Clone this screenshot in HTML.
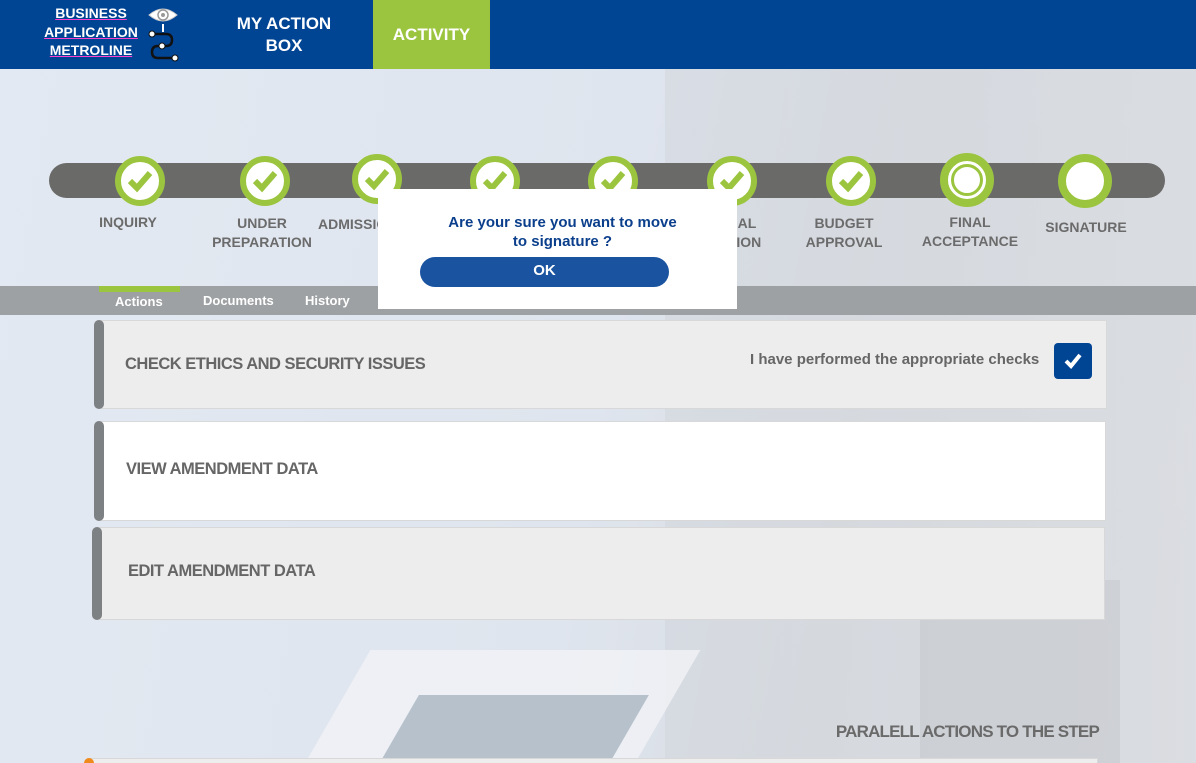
<!DOCTYPE html>
<html><head><meta charset="utf-8"><style>
*{margin:0;padding:0;box-sizing:border-box}
html,body{width:1196px;height:763px;overflow:hidden}
body{position:relative;font-family:"Liberation Sans",sans-serif;font-weight:bold;
background:linear-gradient(100deg,#e3e9f2 0%,#dfe5ee 50%,#d9dde3 70%,#dcdfe3 100%)}
.a{position:absolute}
.hdr{left:0;top:0;width:1196px;height:69px;background:#004494}
.logo{color:#fff;font-size:14px;text-align:center;line-height:18.5px;left:38px;top:4px;width:106px}
.logo span{text-decoration:underline;text-decoration-color:#ff3fcf}
.nav{color:#fff;font-size:17px;text-align:center;line-height:22px}
.step{width:50px;height:50px;border-radius:50%;background:#fff;border:6px solid #9cc53f;top:156px}
.lbl{color:#6b6b6b;font-size:14px;text-align:center;line-height:19px;width:160px}
.card{left:101px;width:1006px;border:1px solid #d8d8d8}
.bar{width:10px;border-radius:5px;background:#7e8183}
.ct{color:#666;font-size:16.5px;letter-spacing:-0.5px}
</style></head><body>
<div class="a" style="left:665px;top:69px;width:531px;height:694px;background:linear-gradient(90deg,rgba(200,203,208,.3),rgba(215,218,222,.45))"></div>
<div class="a" style="left:330px;top:650px;width:330px;height:140px;background:#f1f3f6;transform:skewX(-30deg);opacity:.8"></div>
<div class="a" style="left:390px;top:695px;width:230px;height:100px;background:#b7c1cb;transform:skewX(-30deg)"></div>
<div class="a" style="left:920px;top:580px;width:200px;height:183px;background:rgba(185,188,193,.35)"></div>

<div class="a hdr"></div>
<div class="a logo"><span>BUSINESS</span><br><span>APPLICATION</span><br><span>METROLINE</span></div>
<svg class="a" style="left:146px;top:4px" width="34" height="60" viewBox="0 0 34 60">
<path d="M3 11 Q17 -1 31 11 Q17 23 3 11Z" fill="#fff" stroke="#ccc"/><circle cx="17" cy="11" r="5" fill="none" stroke="#999" stroke-width="1.5"/><circle cx="17" cy="11" r="2" fill="#999"/>
<line x1="17" y1="20" x2="17" y2="28" stroke="#fff" stroke-width="2"/>
<path d="M6 30 H20 Q26 30 26 36 Q26 42 20 42 H12 Q6 42 6 48 Q6 54 12 54 H28" fill="none" stroke="#111" stroke-width="2.5"/>
<circle cx="6" cy="30" r="3" fill="#fff" stroke="#111"/><circle cx="16" cy="42" r="3" fill="#fff" stroke="#111"/><circle cx="29" cy="54" r="3" fill="#fff" stroke="#111"/></svg>
<div class="a nav" style="left:224px;top:13px;width:120px">MY ACTION<br>BOX</div>
<div class="a" style="left:373px;top:0;width:117px;height:69px;background:#9cc53f"></div>
<div class="a nav" style="left:373px;top:24px;width:117px">ACTIVITY</div>

<div class="a" style="left:49px;top:163px;width:1116px;height:35px;border-radius:18px;background:#6a6a69"></div>
<svg width="0" height="0" style="position:absolute"><defs><path id="ck" d="M-10 0 L-3 7 L10 -8" fill="none" stroke="#9cc53f" stroke-width="6"/></defs></svg>
<div class="a step" style="left:115px"><svg width="38" height="38" viewBox="-19 -19 38 38"><use href="#ck"/></svg></div>
<div class="a step" style="left:240px"><svg width="38" height="38" viewBox="-19 -19 38 38"><use href="#ck"/></svg></div>
<div class="a step" style="left:352px;top:154px"><svg width="38" height="38" viewBox="-19 -19 38 38"><use href="#ck"/></svg></div>
<div class="a step" style="left:470px"><svg width="38" height="38" viewBox="-19 -19 38 38"><use href="#ck"/></svg></div>
<div class="a step" style="left:588px"><svg width="38" height="38" viewBox="-19 -19 38 38"><use href="#ck"/></svg></div>
<div class="a step" style="left:707px"><svg width="38" height="38" viewBox="-19 -19 38 38"><use href="#ck"/></svg></div>
<div class="a step" style="left:826px"><svg width="38" height="38" viewBox="-19 -19 38 38"><use href="#ck"/></svg></div>
<div class="a step" style="left:940px;top:153px;width:54px;height:54px;border-width:8px"><div style="margin:3px auto;width:32px;height:32px;border-radius:50%;border:3px solid #9cc53f"></div></div>
<div class="a step" style="left:1058px;top:154px;width:54px;height:54px;border-width:8px"></div>

<div class="a lbl" style="left:48px;top:213px">INQUIRY</div>
<div class="a lbl" style="left:182px;top:214px">UNDER<br>PREPARATION</div>
<div class="a lbl" style="left:318px;top:215px;width:80px;text-align:left">ADMISSION</div>
<div class="a lbl" style="left:660px;top:214px">CIAL<br>ATION</div>
<div class="a lbl" style="left:764px;top:214px">BUDGET<br>APPROVAL</div>
<div class="a lbl" style="left:890px;top:213px">FINAL<br>ACCEPTANCE</div>
<div class="a lbl" style="left:1006px;top:218px">SIGNATURE</div>

<div class="a" style="left:0;top:286px;width:1196px;height:29px;background:#9ea1a3"></div>
<div class="a" style="left:99px;top:286px;width:81px;height:6px;background:#9cc53f"></div>
<div class="a" style="left:115px;top:294px;color:#fff;font-size:13px">Actions</div>
<div class="a" style="left:203px;top:293px;color:#fff;font-size:13px">Documents</div>
<div class="a" style="left:305px;top:293px;color:#fff;font-size:13px">History</div>

<div class="a" style="left:378px;top:189px;width:359px;height:120px;background:#fff"></div>
<div class="a" style="left:378px;top:213px;width:369px;text-align:center;color:#0b3f8c;font-size:15px;line-height:19px">Are your sure you want to move<br>to signature ?</div>
<div class="a" style="left:420px;top:257px;width:249px;height:30px;border-radius:15px;background:#1a54a0;color:#fff;font-size:15px;text-align:center;line-height:28px">OK</div>

<div class="a card" style="top:320px;height:89px;background:#ededed"></div>
<div class="a bar" style="left:94px;top:320px;height:89px"></div>
<div class="a ct" style="left:125px;top:355px">CHECK ETHICS AND SECURITY ISSUES</div>
<div class="a" style="left:750px;top:351px;color:#666;font-size:15px">I have performed the appropriate checks</div>
<div class="a" style="left:1054px;top:343px;width:38px;height:36px;border-radius:4px;background:#004494"><svg width="38" height="36" viewBox="0 0 38 36"><path d="M12 18 L17 23 L26 12" fill="none" stroke="#fff" stroke-width="4"/></svg></div>

<div class="a card" style="top:421px;height:100px;background:#fff;width:1005px"></div>
<div class="a bar" style="left:94px;top:421px;height:100px"></div>
<div class="a ct" style="left:126px;top:460px">VIEW AMENDMENT DATA</div>

<div class="a card" style="top:527px;height:93px;background:#ededed;left:99px;width:1006px"></div>
<div class="a bar" style="left:92px;top:527px;height:93px"></div>
<div class="a ct" style="left:128px;top:562px">EDIT AMENDMENT DATA</div>

<div class="a" style="left:800px;top:722px;width:299px;text-align:right;color:#6a6a6a;font-size:17px;letter-spacing:-0.8px">PARALELL ACTIONS TO THE STEP</div>
<div class="a" style="left:88px;top:758px;width:1010px;height:10px;background:#ededed;border:1px solid #d8d8d8"></div>
<div class="a" style="left:84px;top:758px;width:10px;height:10px;border-radius:5px;background:#f08a1c"></div>
</body></html>
